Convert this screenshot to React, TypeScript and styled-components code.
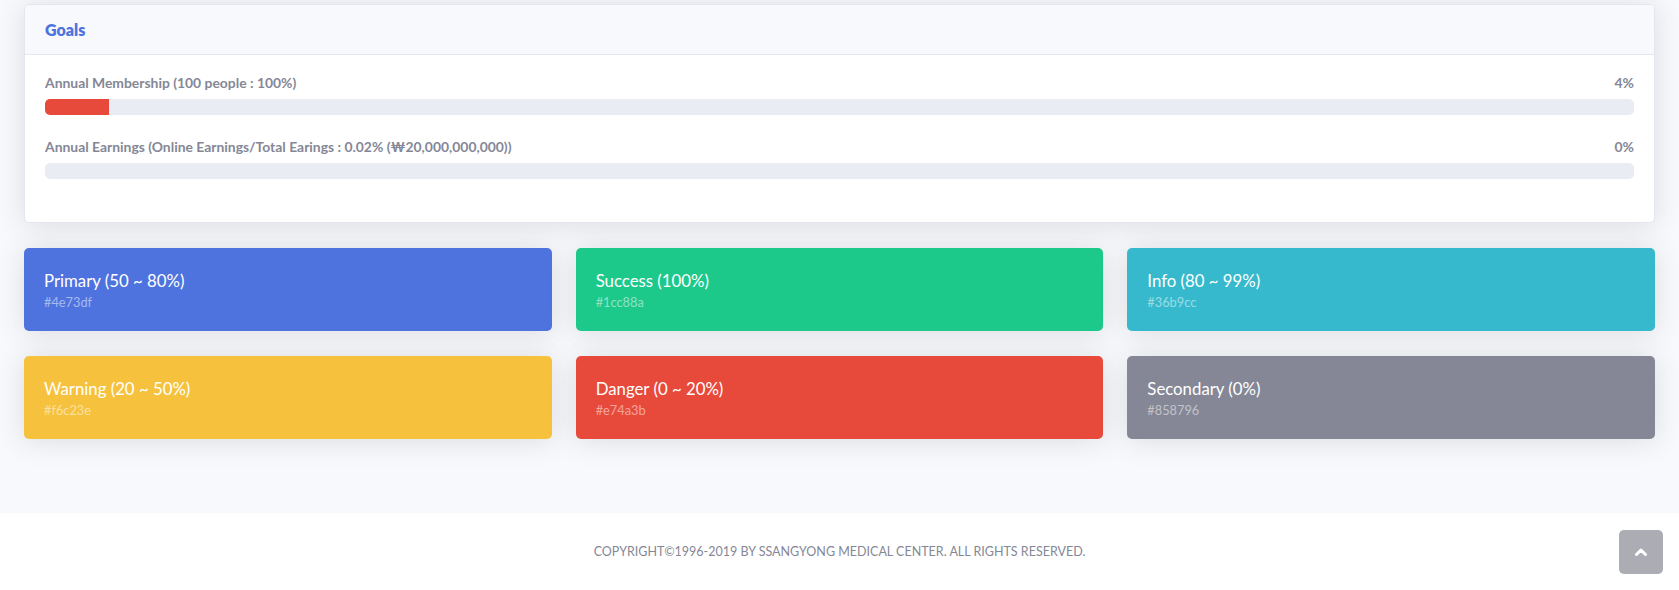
import React from 'react';
import styled, { createGlobalStyle } from 'styled-components';

const GlobalStyle = createGlobalStyle`
  html, body {
    margin: 0;
    padding: 0;
    background: #f8f9fc;
    font-family: Lato, "Noto Sans", "Liberation Sans", sans-serif;
    color: #858796;
  }
  * {
    box-sizing: border-box;
  }
`;

interface Goal {
  label: string;
  percent: number;
}

interface Swatch {
  title: string;
  hex: string;
  color: string;
}

const goals: Goal[] = [
  { label: 'Annual Membership (100 people : 100%)', percent: 4 },
  { label: 'Annual Earnings (Online Earnings/Total Earings : 0.02% (₩20,000,000,000))', percent: 0 },
];

const swatches: Swatch[] = [
  { title: 'Primary (50 ~ 80%)', hex: '#4e73df', color: '#4e73df' },
  { title: 'Success (100%)', hex: '#1cc88a', color: '#1cc88a' },
  { title: 'Info (80 ~ 99%)', hex: '#36b9cc', color: '#36b9cc' },
  { title: 'Warning (20 ~ 50%)', hex: '#f6c23e', color: '#f6c23e' },
  { title: 'Danger (0 ~ 20%)', hex: '#e74a3b', color: '#e74a3b' },
  { title: 'Secondary (0%)', hex: '#858796', color: '#858796' },
];

export default function App() {
  return (
    <Page>
      <GlobalStyle />
      <Content>
        <Card>
          <CardHeader>
            <CardTitle>Goals</CardTitle>
          </CardHeader>
          <CardBody>
            {goals.map((g) => (
              <GoalItem key={g.label}>
                <GoalLabel>
                  <span>{g.label}</span>
                  <span>{g.percent}%</span>
                </GoalLabel>
                <Track>
                  <Fill style={{ width: `${g.percent}%` }} />
                </Track>
              </GoalItem>
            ))}
          </CardBody>
        </Card>
        <SwatchGrid>
          {swatches.map((s) => (
            <SwatchCard key={s.title} $bg={s.color}>
              <SwatchTitle>{s.title}</SwatchTitle>
              <SwatchHex>{s.hex}</SwatchHex>
            </SwatchCard>
          ))}
        </SwatchGrid>
      </Content>
      <Footer>
        <Copyright>COPYRIGHT©1996-2019 BY SSANGYONG MEDICAL CENTER. ALL RIGHTS RESERVED.</Copyright>
      </Footer>
      <ScrollTop href="#top" aria-label="Scroll to top">
        <svg width="12" height="8" viewBox="0 0 12 8">
          <polyline points="1.5,6.5 6,2 10.5,6.5" fill="none" stroke="#fff" strokeWidth="3" strokeLinecap="round" strokeLinejoin="round" />
        </svg>
      </ScrollTop>
    </Page>
  );
}

const Page = styled.div`
  min-height: 590px;
  display: flex;
  flex-direction: column;
`;

const Content = styled.div`
  flex: 1;
  padding: 4px 24px 24px 24px;
`;

const Card = styled.div`
  background: #fff;
  border: 1px solid #e3e6f0;
  border-radius: 5px;
  box-shadow: 0 2px 28px 0 rgba(58, 59, 69, 0.15);
  margin-bottom: 25px;
  overflow: hidden;
`;

const CardHeader = styled.div`
  background: #f8f9fc;
  border-bottom: 1px solid #e3e6f0;
  padding: 15px 20px;
`;

const CardTitle = styled.h6`
  margin: 0;
  font-size: 16px;
  line-height: 1.2;
  font-weight: 800;
  color: #4e73df;
`;

const CardBody = styled.div`
  padding: 20px 20px 19px 20px;
`;

const GoalItem = styled.div`
  margin-bottom: 24px;
`;

const GoalLabel = styled.h4`
  margin: 0 0 8px 0;
  display: flex;
  justify-content: space-between;
  font-size: 13.9px;
  line-height: 16px;
  font-weight: 700;
  color: #858796;
`;

const Track = styled.div`
  height: 16px;
  background: #eaecf4;
  border-radius: 5px;
  overflow: hidden;
`;

const Fill = styled.div`
  height: 100%;
  background: #e74a3b;
`;

const SwatchGrid = styled.div`
  display: grid;
  grid-template-columns: repeat(3, 1fr);
  column-gap: 24px;
  row-gap: 25px;
`;

const SwatchCard = styled.div<{ $bg: string }>`
  background: ${(p) => p.$bg};
  border-radius: 5px;
  box-shadow: 0 2px 28px 0 rgba(58, 59, 69, 0.15);
  padding: 21px 20px 20px 20px;
  height: 83px;
`;

const SwatchTitle = styled.div`
  color: #fff;
  font-size: 16.8px;
  line-height: 24px;
`;

const SwatchHex = styled.div`
  color: rgba(255, 255, 255, 0.5);
  font-size: 12.8px;
  line-height: 18px;
`;

const Footer = styled.footer`
  background: #fff;
  padding: 32px 0;
  text-align: center;
`;

const Copyright = styled.div`
  font-size: 12.5px;
  line-height: 13px;
  color: #858796;
`;

const ScrollTop = styled.a`
  position: fixed;
  right: 16px;
  bottom: 16px;
  width: 44px;
  height: 44px;
  border-radius: 5px;
  background: rgba(90, 92, 105, 0.5);
  display: flex;
  align-items: center;
  justify-content: center;
`;
